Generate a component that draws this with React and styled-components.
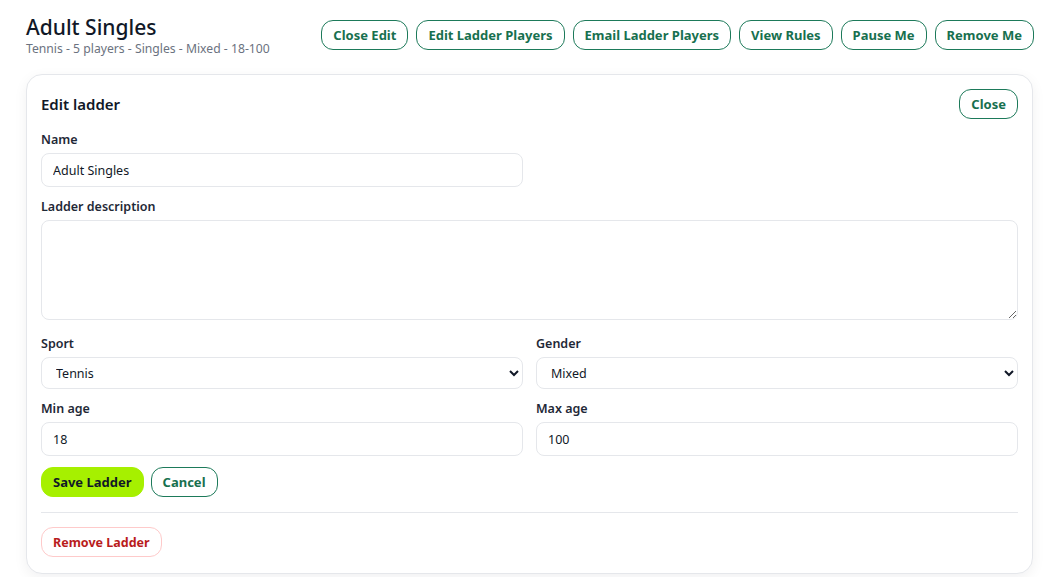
import React from "react";
import styled, { createGlobalStyle } from "styled-components";

const GlobalStyle = createGlobalStyle`
  html, body {
    margin: 0;
    padding: 0;
    background: #ffffff;
    font-family: "Noto Sans", "Open Sans", sans-serif;
    color: #111827;
  }
  * { box-sizing: border-box; }
`;

export default function App() {
  return (
    <>
      <GlobalStyle />
      <Page>
        <TopBar>
          <TitleBlock>
            <Title>Adult Singles</Title>
            <Subtitle>Tennis - 5 players - Singles - Mixed - 18-100</Subtitle>
          </TitleBlock>
          <Actions>
            <OutlineButton>Close Edit</OutlineButton>
            <OutlineButton>Edit Ladder Players</OutlineButton>
            <OutlineButton>Email Ladder Players</OutlineButton>
            <OutlineButton>View Rules</OutlineButton>
            <OutlineButton>Pause Me</OutlineButton>
            <OutlineButton>Remove Me</OutlineButton>
          </Actions>
        </TopBar>

        <Card>
          <CardHeader>
            <CardTitle>Edit ladder</CardTitle>
            <OutlineButton>Close</OutlineButton>
          </CardHeader>

          <Field>
            <Label>Name</Label>
            <HalfRow>
              <Input defaultValue="Adult Singles" />
            </HalfRow>
          </Field>

          <Field>
            <Label>Ladder description</Label>
            <TextArea />
          </Field>

          <Grid>
            <Field>
              <Label>Sport</Label>
              <Select defaultValue="Tennis">
                <option>Tennis</option>
                <option>Pickleball</option>
                <option>Squash</option>
              </Select>
            </Field>
            <Field>
              <Label>Gender</Label>
              <Select defaultValue="Mixed">
                <option>Mixed</option>
                <option>Men</option>
                <option>Women</option>
              </Select>
            </Field>
            <Field>
              <Label>Min age</Label>
              <Input defaultValue="18" />
            </Field>
            <Field>
              <Label>Max age</Label>
              <Input defaultValue="100" />
            </Field>
          </Grid>

          <ButtonRow>
            <PrimaryButton>Save Ladder</PrimaryButton>
            <OutlineButton>Cancel</OutlineButton>
          </ButtonRow>

          <Divider />

          <ButtonRow>
            <DangerButton>Remove Ladder</DangerButton>
          </ButtonRow>
        </Card>
      </Page>
    </>
  );
}

const Page = styled.div`
  padding: 14px 18px 3px 26px;
`;

const TopBar = styled.div`
  display: flex;
  justify-content: space-between;
  align-items: flex-start;
  margin-bottom: 16px;
`;

const TitleBlock = styled.div`
  display: flex;
  flex-direction: column;
`;

const Title = styled.h1`
  margin: 0;
  font-size: 21px;
  font-weight: 500;
  line-height: 26px;
  color: #111827;
`;

const Subtitle = styled.div`
  font-size: 12.2px;
  line-height: 18px;
  color: #6b7280;
`;

const Actions = styled.div`
  display: flex;
  gap: 8px;
  margin-top: 6px;
  margin-right: -1px;
`;

const OutlineButton = styled.button`
  height: 30px;
  padding: 0 11px;
  border: 1px solid #1d7a5a;
  border-radius: 12px;
  background: #ffffff;
  color: #17704f;
  font-family: inherit;
  font-size: 13px;
  font-weight: 700;
  cursor: pointer;
  white-space: nowrap;
`;

const PrimaryButton = styled(OutlineButton)`
  background: #a6f000;
  border-color: #a6f000;
  color: #111827;
`;

const DangerButton = styled(OutlineButton)`
  border-color: #fecaca;
  color: #b91c1c;
  font-size: 12.5px;
`;

const Card = styled.div`
  border: 1px solid #e5e7eb;
  border-radius: 16px;
  background: #ffffff;
  padding: 14px 14px 16px;
  box-shadow: 0 4px 14px rgba(15, 23, 42, 0.06);
  display: flex;
  flex-direction: column;
`;

const CardHeader = styled.div`
  display: flex;
  justify-content: space-between;
  align-items: center;
  margin-bottom: 12px;
`;

const CardTitle = styled.h2`
  margin: 0;
  font-size: 15px;
  font-weight: 600;
  color: #111827;
`;

const Field = styled.div`
  display: flex;
  flex-direction: column;
  gap: 4px;
  margin-bottom: 11px;
`;

const Label = styled.label`
  font-size: 12.5px;
  font-weight: 600;
  line-height: 18px;
  color: #1f2937;
`;

const HalfRow = styled.div`
  display: grid;
  grid-template-columns: 1fr 1fr;
  column-gap: 13px;
`;

const Grid = styled.div`
  display: grid;
  grid-template-columns: 1fr 1fr;
  column-gap: 13px;
  margin-top: 4px;
`;

const Input = styled.input`
  height: 34px;
  width: 100%;
  padding: 0 11px;
  border: 1px solid #e5e7eb;
  border-radius: 8px;
  font-family: inherit;
  font-size: 12.5px;
  color: #111827;
  background: #ffffff;
  outline: none;
`;

const TextArea = styled.textarea`
  display: block;
  width: 100%;
  height: 100px;
  padding: 8px 11px;
  border: 1px solid #e5e7eb;
  border-radius: 8px;
  font-family: inherit;
  font-size: 12.5px;
  background: #ffffff;
`;

const Select = styled.select`
  height: 32px;
  width: 100%;
  padding: 0 10px;
  border: 1px solid #e5e7eb;
  border-radius: 8px;
  font-family: inherit;
  font-size: 12.5px;
  color: #111827;
  background: #ffffff;
`;

const ButtonRow = styled.div`
  display: flex;
  gap: 7px;
`;

const Divider = styled.hr`
  width: 100%;
  border: none;
  border-top: 1px solid #e5e7eb;
  margin: 15px 0 14px;
`;
